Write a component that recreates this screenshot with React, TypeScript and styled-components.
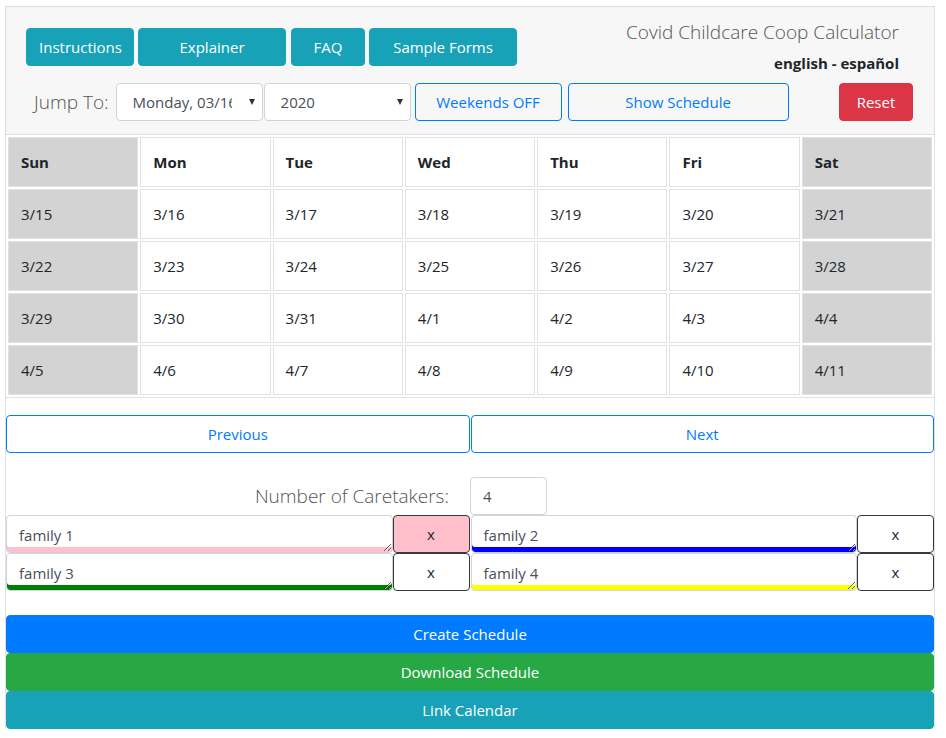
import React from 'react';
import styled, { createGlobalStyle } from 'styled-components';

const Global = createGlobalStyle`
  html, body { margin: 0; padding: 0; background: #fff; }
  body {
    font-family: "Open Sans", "Noto Sans", sans-serif;
    font-size: 15px;
    color: #212529;
  }
  * { box-sizing: border-box; }
`;

const Page = styled.div`
  padding: 6px 11px 8px 5px;
`;

const Frame = styled.div`
  border-left: 1px solid #dee2e6;
  border-right: 1px solid #dee2e6;
`;

const Header = styled.div`
  background: #f7f7f7;
  border: 1px solid #ddd;
  margin: 0 -1px;
  padding: 21px 0 13px 0;
`;

const TopRow = styled.div`
  display: flex;
  justify-content: space-between;
  align-items: flex-start;
  height: 38px;
  padding: 0 35px 0 20px;
`;

const BtnGroup = styled.div`
  display: flex;
  gap: 4px;
`;

type Variant = 'info' | 'danger' | 'primary' | 'success' | 'outline' | 'dark';

const Btn = styled.button<{ $w?: number; $variant: Variant; $pink?: boolean }>`
  font-family: inherit;
  font-size: 15px;
  line-height: 24px;
  height: 38px;
  padding: 6px 12px;
  border-radius: 4px;
  cursor: pointer;
  white-space: nowrap;
  flex: none;
  width: ${p => (p.$w ? `${p.$w}px` : 'auto')};
  ${p => p.$variant === 'info' && 'background:#17a2b8;border:1px solid #17a2b8;color:#fff;'}
  ${p => p.$variant === 'danger' && 'background:#dc3545;border:1px solid #dc3545;color:#fff;'}
  ${p => p.$variant === 'primary' && 'background:#007bff;border:1px solid #007bff;color:#fff;'}
  ${p => p.$variant === 'success' && 'background:#28a745;border:1px solid #28a745;color:#fff;'}
  ${p => p.$variant === 'outline' && 'background:transparent;border:1px solid #007bff;color:#007bff;'}
  ${p => p.$variant === 'dark' && `background:${p.$pink ? 'pink' : '#fff'};border:1px solid #343a40;color:#212529;`}
`;

const TitleBlock = styled.div`
  margin-top: -11px;
  text-align: right;
`;

const Title = styled.div`
  font-size: 19px;
  font-weight: 300;
  line-height: 30px;
  color: #555;
`;

const Lang = styled.div`
  margin-top: 4px;
  font-weight: 700;
  font-size: 15px;
  line-height: 24px;
`;

const SecondRow = styled.div`
  display: flex;
  align-items: center;
  margin-top: 17px;
  padding: 0 21px 0 28px;
`;

const JumpLabel = styled.label`
  font-size: 19px;
  font-weight: 300;
  color: #555;
  margin-right: 7px;
`;

const SelectWrap = styled.div`
  position: relative;
  width: 147px;
  margin-right: 1px;
  flex: none;
  &::after {
    content: "";
    position: absolute;
    right: 8px;
    top: 16px;
    border-left: 3.5px solid transparent;
    border-right: 3.5px solid transparent;
    border-top: 6px solid #333;
    pointer-events: none;
  }
`;

const Select = styled.select`
  appearance: none;
  -webkit-appearance: none;
  display: block;
  font-family: inherit;
  font-size: 15px;
  height: 38px;
  width: 100%;
  padding: 6px 30px 6px 16px;
  border: 1px solid #ced4da;
  border-radius: 4px;
  background: #fff;
  color: #495057;
  white-space: nowrap;
  overflow: hidden;
`;

const Spacer = styled.div`
  flex: 1;
`;

const Table = styled.table`
  width: 100%;
  border-collapse: separate;
  border-spacing: 2px;
  border-bottom: 1px solid #dee2e6;
  table-layout: fixed;
`;

const Cell = styled.td<{ $weekend?: boolean; $head?: boolean }>`
  border: 1px solid #dee2e6;
  padding: 12px;
  height: 50px;
  line-height: 24px;
  font-size: 15px;
  text-align: left;
  font-weight: ${p => (p.$head ? 700 : 400)};
  background: ${p => (p.$weekend ? '#d3d3d3' : '#fff')};
  color: #212529;
`;

const Pager = styled.div`
  display: grid;
  grid-template-columns: 1fr 1fr;
  gap: 1px;
  margin-top: 17px;
`;

const CountRow = styled.div`
  display: grid;
  grid-template-columns: 1fr 1fr;
  align-items: center;
  margin-top: 24px;
`;

const CountLabel = styled.label`
  text-align: right;
  padding-right: 21px;
  font-size: 19px;
  font-weight: 300;
  color: #555;
`;

const CountInput = styled.input`
  font-family: inherit;
  font-size: 15px;
  width: 77px;
  height: 38px;
  padding: 6px 12px;
  border: 1px solid #ced4da;
  border-radius: 4px;
  color: #495057;
`;

const Families = styled.div`
  display: grid;
  grid-template-columns: 1fr 1fr;
  column-gap: 1px;
`;

const FamilyItem = styled.div`
  display: flex;
`;

const FamilyText = styled.textarea<{ $color: string }>`
  flex: 1;
  height: 38px;
  font-family: inherit;
  font-size: 15px;
  line-height: 22px;
  padding: 8px 12px 4px;
  border: 1px solid #ced4da;
  border-radius: 4px;
  color: #495057;
  box-shadow: inset 0 -5px 0 ${p => p.$color};
  resize: both;
  overflow: hidden;
`;

const XBtn = styled(Btn)`
  width: 77px;
`;

const Actions = styled.div`
  display: flex;
  flex-direction: column;
  margin-top: 24px;
`;

const days = ['Sun', 'Mon', 'Tue', 'Wed', 'Thu', 'Fri', 'Sat'];
const weeks = [
  ['3/15', '3/16', '3/17', '3/18', '3/19', '3/20', '3/21'],
  ['3/22', '3/23', '3/24', '3/25', '3/26', '3/27', '3/28'],
  ['3/29', '3/30', '3/31', '4/1', '4/2', '4/3', '4/4'],
  ['4/5', '4/6', '4/7', '4/8', '4/9', '4/10', '4/11'],
];

const families = [
  { name: 'family 1', color: 'pink', pink: true },
  { name: 'family 2', color: 'blue', pink: false },
  { name: 'family 3', color: 'green', pink: false },
  { name: 'family 4', color: 'yellow', pink: false },
];

export default function App() {
  return (
    <>
      <Global />
      <Page>
        <Frame>
          <Header>
            <TopRow>
              <BtnGroup>
                <Btn $variant="info" $w={108}>Instructions</Btn>
                <Btn $variant="info" $w={148}>Explainer</Btn>
                <Btn $variant="info" $w={74} style={{ marginLeft: 1 }}>FAQ</Btn>
                <Btn $variant="info" $w={148}>Sample Forms</Btn>
              </BtnGroup>
              <TitleBlock>
                <Title>Covid Childcare Coop Calculator</Title>
                <Lang>english - español</Lang>
              </TitleBlock>
            </TopRow>
            <SecondRow>
              <JumpLabel>Jump To:</JumpLabel>
              <SelectWrap>
                <Select defaultValue="m">
                  <option value="m">Monday, 03/16</option>
                </Select>
              </SelectWrap>
              <SelectWrap>
                <Select defaultValue="2020">
                  <option value="2020">2020</option>
                </Select>
              </SelectWrap>
              <Btn $variant="outline" $w={147} style={{ marginLeft: 3 }}>Weekends OFF</Btn>
              <Btn $variant="outline" $w={221} style={{ marginLeft: 6 }}>Show Schedule</Btn>
              <Spacer />
              <Btn $variant="danger" $w={74}>Reset</Btn>
            </SecondRow>
          </Header>
          <Table>
            <thead>
              <tr>
                {days.map((d, i) => (
                  <Cell as="th" key={d} $head $weekend={i === 0 || i === 6}>
                    {d}
                  </Cell>
                ))}
              </tr>
            </thead>
            <tbody>
              {weeks.map((w, r) => (
                <tr key={r}>
                  {w.map((d, i) => (
                    <Cell key={d} $weekend={i === 0 || i === 6}>{d}</Cell>
                  ))}
                </tr>
              ))}
            </tbody>
          </Table>
          <Pager>
            <Btn $variant="outline">Previous</Btn>
            <Btn $variant="outline">Next</Btn>
          </Pager>
          <CountRow>
            <CountLabel>Number of Caretakers:</CountLabel>
            <div>
              <CountInput defaultValue="4" />
            </div>
          </CountRow>
          <Families>
            {families.map(f => (
              <FamilyItem key={f.name}>
                <FamilyText $color={f.color} defaultValue={f.name} />
                <XBtn $variant="dark" $pink={f.pink}>x</XBtn>
              </FamilyItem>
            ))}
          </Families>
          <Actions>
            <Btn $variant="primary">Create Schedule</Btn>
            <Btn $variant="success">Download Schedule</Btn>
            <Btn $variant="info">Link Calendar</Btn>
          </Actions>
        </Frame>
      </Page>
    </>
  );
}
